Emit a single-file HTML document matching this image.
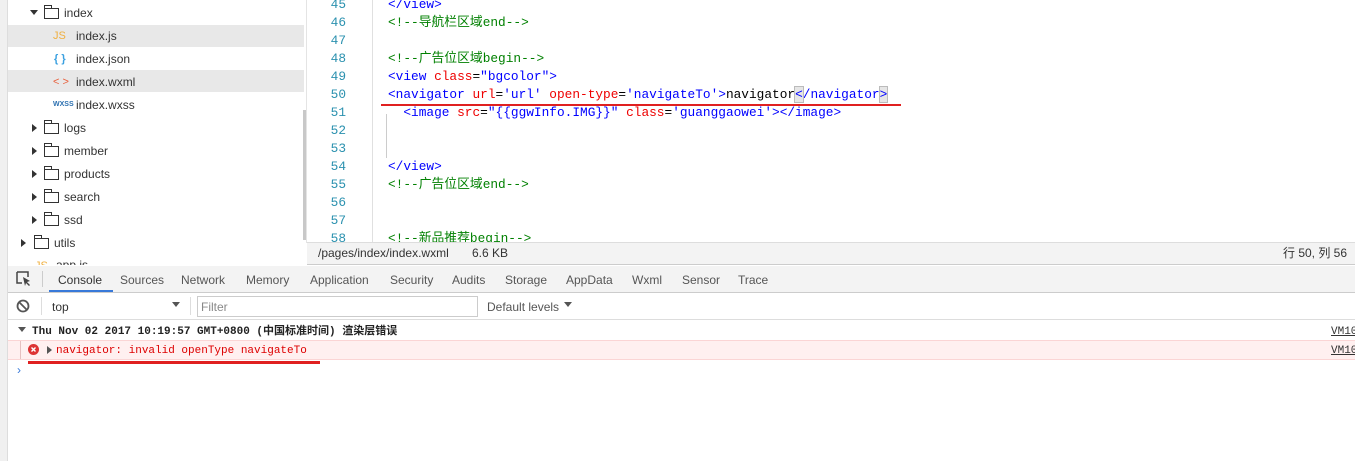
<!DOCTYPE html>
<html><head><meta charset="utf-8"><style>
*{margin:0;padding:0;box-sizing:border-box}
body{width:1355px;height:461px;overflow:hidden;background:#fff;position:relative;font-family:"Liberation Sans","Noto Sans CJK SC",sans-serif;font-size:12px;color:#333}
.a{position:absolute;white-space:pre;line-height:16px}
.mono{font-family:"Liberation Mono","Noto Sans CJK SC",monospace}
.tri{width:0;height:0;border-left:5px solid #333;border-top:4px solid transparent;border-bottom:4px solid transparent}
.trd{width:0;height:0;border-top:5px solid #333;border-left:4px solid transparent;border-right:4px solid transparent}
.fold{width:15px;height:11px;border:1px solid #333;border-top-width:1px}
.fold:before{content:"";position:absolute;left:-1px;top:-4px;width:6px;height:3px;border:1px solid #333;border-bottom:none}
.ln{position:absolute;left:312px;width:34px;text-align:right;color:#2b91af;font-family:"Liberation Mono",monospace;font-size:12.8px;line-height:18px;height:18px}
.cd{position:absolute;left:388px;font-family:"Liberation Mono","Noto Sans CJK SC",monospace;font-size:12.8px;white-space:pre;color:#00f;line-height:18px;height:18px}
.t{color:#00f}.at{color:#e00}.v{color:#00f}.cm{color:#008000}.k{color:#000}
.tab{position:absolute;top:272px;color:#555;font-size:12px;line-height:16px}
</style></head><body>
<div class="a" style="left:0;top:0;width:8px;height:461px;background:#f0f0f0;border-right:1px solid #ddd"></div>
<div class="a" style="left:8px;top:25px;width:296px;height:22px;background:#e8e8e8"></div>
<div class="a" style="left:8px;top:70px;width:296px;height:22px;background:#e8e8e8"></div>
<div class="a" style="left:303px;top:110px;width:3px;height:130px;background:#c8c8c8"></div>
<div class="a" style="left:306px;top:0;width:1px;height:243px;background:#e4e4e4"></div>

<div class="a trd" style="left:30px;top:10px"></div>
<div class="a fold" style="left:44px;top:8px"></div>
<div class="a" style="left:64px;top:5px">index</div>
<div class="a" style="left:53px;top:28px;color:#f0b040;font-size:11px">JS</div><div class="a" style="left:76px;top:28px">index.js</div>
<div class="a" style="left:54px;top:51px;color:#3aa0e0;font-weight:bold;font-size:11px">{ }</div><div class="a" style="left:76px;top:51px">index.json</div>
<div class="a" style="left:53px;top:74px;color:#e8603c;font-size:11px">&lt; &gt;</div><div class="a" style="left:76px;top:74px">index.wxml</div>
<div class="a" style="left:53px;top:97px;color:#2a6fb0;font-size:7px;font-weight:bold">WXSS</div><div class="a" style="left:76px;top:97px">index.wxss</div>

<div class="a tri" style="left:32px;top:124px"></div><div class="a fold" style="left:44px;top:123px"></div><div class="a" style="left:64px;top:120px">logs</div>
<div class="a tri" style="left:32px;top:147px"></div><div class="a fold" style="left:44px;top:146px"></div><div class="a" style="left:64px;top:143px">member</div>
<div class="a tri" style="left:32px;top:170px"></div><div class="a fold" style="left:44px;top:169px"></div><div class="a" style="left:64px;top:166px">products</div>
<div class="a tri" style="left:32px;top:193px"></div><div class="a fold" style="left:44px;top:192px"></div><div class="a" style="left:64px;top:189px">search</div>
<div class="a tri" style="left:32px;top:216px"></div><div class="a fold" style="left:44px;top:215px"></div><div class="a" style="left:64px;top:212px">ssd</div>
<div class="a tri" style="left:21px;top:239px"></div><div class="a fold" style="left:34px;top:238px"></div><div class="a" style="left:54px;top:235px">utils</div>
<div class="a" style="left:35px;top:258px;color:#f0b040;font-size:11px">JS</div><div class="a" style="left:56px;top:257px">app.js</div>

<div class="a" style="left:372px;top:0;width:1px;height:243px;background:#e0e0e0"></div>
<div class="a" style="left:386px;top:114px;width:1px;height:44px;background:#ccc"></div>
<div class="ln" style="top:-4px">45</div><div class="ln" style="top:14px">46</div><div class="ln" style="top:32px">47</div><div class="ln" style="top:50px">48</div><div class="ln" style="top:68px">49</div><div class="ln" style="top:86px">50</div><div class="ln" style="top:104px">51</div><div class="ln" style="top:122px">52</div><div class="ln" style="top:140px">53</div><div class="ln" style="top:158px">54</div><div class="ln" style="top:176px">55</div><div class="ln" style="top:194px">56</div><div class="ln" style="top:212px">57</div><div class="ln" style="top:230px">58</div>
<div class="cd" style="top:-4px">&lt;/view&gt;</div>
<div class="cd cm" style="top:14px">&lt;!--导航栏区域end--&gt;</div>
<div class="cd cm" style="top:50px">&lt;!--广告位区域begin--&gt;</div>
<div class="cd" style="top:68px">&lt;view <span class="at">class</span><span class="k">=</span>"bgcolor"&gt;</div>
<div class="cd" style="top:86px">&lt;navigator <span class="at">url</span><span class="k">=</span>'url' <span class="at">open-type</span><span class="k">=</span>'navigateTo'&gt;<span class="k">navigator</span><span style="background:#e6e6e6;outline:1px solid #bbb">&lt;</span>/navigator<span style="background:#e6e6e6;outline:1px solid #bbb">&gt;</span></div>
<div class="a" style="left:381px;top:104px;width:520px;height:2px;background:#e02020"></div>
<div class="cd" style="top:104px">  &lt;image <span class="at">src</span><span class="k">=</span>"{{ggwInfo.IMG}}" <span class="at">class</span><span class="k">=</span>'guanggaowei'&gt;&lt;/image&gt;</div>
<div class="cd" style="top:158px">&lt;/view&gt;</div>
<div class="cd cm" style="top:176px">&lt;!--广告位区域end--&gt;</div>
<div class="cd cm" style="top:230px">&lt;!--新品推荐begin--&gt;</div>

<div class="a" style="left:307px;top:242px;width:1048px;height:23px;background:#f3f3f3;border-top:1px solid #ddd;border-bottom:1px solid #ccc"></div>
<div class="a" style="left:318px;top:245px">/pages/index/index.wxml</div>
<div class="a" style="left:472px;top:245px">6.6 KB</div>
<div class="a" style="left:1283px;top:245px">行 50, 列 56</div>

<div class="a" style="left:8px;top:265px;width:1347px;height:196px;background:#fff"></div>
<div class="a" style="left:8px;top:266px;width:1347px;height:27px;background:#f3f3f3;border-bottom:1px solid #ccc"></div>
<svg class="a" style="left:16px;top:271px" width="16" height="16"><path d="M1 1h11v5M1 1v11h5" fill="none" stroke="#444" stroke-width="1.5"/><path d="M7 6l7 4-3 1 3 3-1 1-3-3-1 3z" fill="#444"/></svg>
<div class="a" style="left:42px;top:271px;width:1px;height:16px;background:#ccc"></div>
<div class="tab" style="left:58px;color:#333">Console</div>
<div class="a" style="left:49px;top:290px;width:64px;height:2px;background:#3879d9"></div>
<div class="tab" style="left:120px">Sources</div><div class="tab" style="left:181px">Network</div><div class="tab" style="left:246px">Memory</div><div class="tab" style="left:310px">Application</div><div class="tab" style="left:390px">Security</div><div class="tab" style="left:452px">Audits</div><div class="tab" style="left:505px">Storage</div><div class="tab" style="left:566px">AppData</div><div class="tab" style="left:632px">Wxml</div><div class="tab" style="left:682px">Sensor</div><div class="tab" style="left:738px">Trace</div>
<div class="a" style="left:8px;top:319px;width:1347px;height:1px;background:#ddd"></div>
<svg class="a" style="left:16px;top:299px" width="14" height="14"><circle cx="7" cy="7" r="5.5" fill="none" stroke="#555" stroke-width="1.8"/><path d="M3 3l8 8" stroke="#555" stroke-width="1.8"/></svg>
<div class="a" style="left:41px;top:297px;width:1px;height:18px;background:#ddd"></div>
<div class="a" style="left:52px;top:299px;color:#333">top</div>
<div class="a trd" style="left:172px;top:302px;border-top-color:#555"></div>
<div class="a" style="left:190px;top:297px;width:1px;height:18px;background:#ddd"></div>
<div class="a" style="left:197px;top:296px;width:281px;height:21px;border:1px solid #ccc"></div>
<div class="a" style="left:201px;top:299px;color:#888">Filter</div>
<div class="a" style="left:487px;top:299px;color:#555">Default levels</div>
<div class="a trd" style="left:564px;top:302px;border-top-color:#555"></div>

<div class="a trd" style="left:18px;top:327px;border-top-color:#555"></div>
<div class="a mono" style="left:32px;top:324px;font-size:11px;font-weight:bold;color:#222">Thu Nov 02 2017 10:19:57 GMT+0800 (中国标准时间) 渲染层错误</div>
<div class="a mono" style="left:1331px;top:324px;font-size:11px;color:#333;text-decoration:underline">VM10</div>
<div class="a" style="left:8px;top:340px;width:1347px;height:20px;background:#fff0f0;border-top:1px solid #fbd5d5;border-bottom:1px solid #fbd5d5"></div>
<div class="a" style="left:20px;top:341px;width:1px;height:18px;background:#e6c0c0"></div>
<svg class="a" style="left:28px;top:344px" width="11" height="11"><circle cx="5.5" cy="5.5" r="5.5" fill="#d33"/><path d="M3.5 3.5l4 4M7.5 3.5l-4 4" stroke="#fff" stroke-width="1.4"/></svg>
<div class="a tri" style="left:47px;top:346px;border-left-color:#555"></div>
<div class="a mono" style="left:56px;top:343px;font-size:11px;color:#d00">navigator: invalid openType navigateTo</div>
<div class="a mono" style="left:1331px;top:343px;font-size:11px;color:#333;text-decoration:underline">VM10</div>
<div class="a" style="left:28px;top:361px;width:292px;height:3px;background:#e02020"></div>
<div class="a" style="left:17px;top:362px;color:#3879d9;font-size:12px">›</div>
</body></html>
